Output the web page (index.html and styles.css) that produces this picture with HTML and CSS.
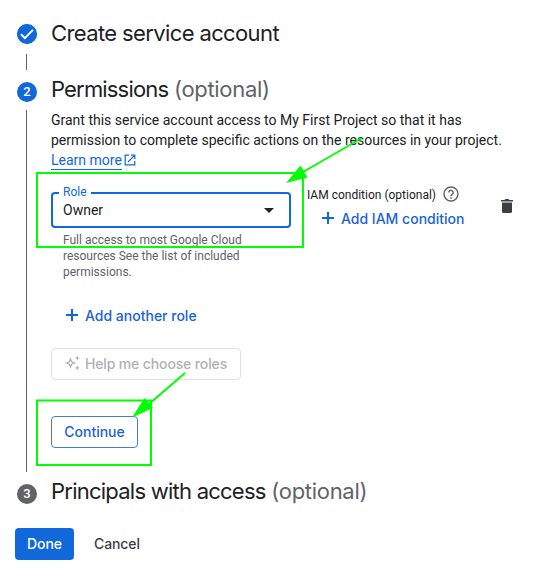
FILE: index.html
```html
<!DOCTYPE html>
<html lang="en">
<head>
<meta charset="utf-8">
<title>Create service account</title>
<link rel="stylesheet" href="styles.css">
</head>
<body>
<main class="page">
  <section class="step step-create">
    <div class="rail">
      <svg class="badge" viewBox="0 0 20 20"><circle cx="10" cy="10" r="10" fill="#1068da"/><path d="M4 10.3l3.8 3.8 8.2-8.2" fill="none" stroke="#fff" stroke-width="2"/></svg>
      <i class="line"></i>
    </div>
    <div class="content"><h2 class="t-create">Create service account</h2></div>
  </section>
  <section class="step step-permissions">
    <div class="rail"><span class="badge">2</span><i class="line"></i></div>
    <div class="content">
      <h2><span class="t-perm">Permissions</span> <span class="optional">(optional)</span></h2>
      <p class="intro">Grant this service account access to My First Project so that it has<br>permission to complete specific actions on the resources in your project.<br><a class="learn"><span>Learn more</span><svg width="12" height="12" viewBox="0 0 12 12" fill="none" stroke="#1068da" stroke-width="1.2"><path d="M5 1.2H1.2v9.6h9.6V7M7 1.2h3.8V5M10.8 1.2L4 8"/></svg></a></p>
      <div class="binding">
        <div class="role">
          <div class="select"><span class="label">Role</span><span>Owner</span><i class="arrow"></i></div>
          <p class="hint">Full access to most Google Cloud<br>resources See the list of included<br>permissions.</p>
        </div>
        <div class="condition">
          <div class="condition-label"><span>IAM condition (optional)</span><svg width="16" height="16" viewBox="0 0 16 16" fill="none" stroke="#5f6368" stroke-width="1.4"><circle cx="8" cy="8" r="7"/><path d="M5.8 6.5a2.2 2.2 0 1 1 3.6 1.7C8.5 8.9 8 9.200 8 10M8 11.200v1.500"/></svg></div>
          <div class="action add-condition"><svg class="plus" viewBox="0 0 12 12"><path d="M6 0v12M0 6h12"/></svg><span>Add IAM condition</span></div>
        </div>
        <svg class="trash" width="12" height="14" viewBox="0 0 12 14" fill="#3c4043"><path d="M0 1h3.500l1-1h3l1 1H12v1.500H0zM1 3.500h10V12.500Q11 14 9.500 14h-7Q1 14 1 12.500z"/></svg>
      </div>
      <div class="action add-role"><svg class="plus" viewBox="0 0 12 12"><path d="M6 0v12M0 6h12"/></svg><span>Add another role</span></div>
      <div class="button help"><svg width="16" height="16" viewBox="0 0 16 16" fill="#b0b1b3"><path d="M5.500 4L6.700 6.800 9.500 8 6.700 9.200 5.500 12 4.300 9.200 1.500 8 4.300 6.800z" fill="none" stroke="#b0b1b3" stroke-width="1.300"/><path d="M12.300.500l.7 1.900 1.900.7-1.900.7-.7 1.900-.7-1.900-1.900-.7 1.900-.7zM12.300 10.300l.7 1.900 1.900.7-1.900.7-.7 1.900-.7-1.900-1.900-.7 1.900-.7z"/></svg><span>Help me choose roles</span></div>
      <div class="button continue">Continue</div>
    </div>
  </section>
  <section class="step step-principals">
    <div class="rail"><span class="badge muted">3</span></div>
    <div class="content"><h2><span class="t-princ">Principals with access</span> <span class="optional">(optional)</span></h2></div>
  </section>
  <footer class="actions"><div class="button done">Done</div><div class="cancel">Cancel</div></footer>
</main>
<svg class="annotations" width="550" height="584" viewBox="0 0 550 584">
  <g fill="none" stroke="#0f0" stroke-width="2"><rect x="37" y="173" width="266" height="74"/><rect x="37" y="400.500" width="114" height="64.500"/><path d="M362 138L303 172M185 373L149 404"/></g>
  <path fill="#0f0" d="M286 183L300.500 165.500 307.500 177.500zM132 417.500L144.500 398 153 408z"/>
</svg>
</body>
</html>
```
FILE: styles.css
```css
* { box-sizing: border-box; }
body { margin: 0; background: #fff; color: #202124; font: 14px/20px Roboto, sans-serif; }
.page { padding: 24px 15px 0; }
.step { display: flex; margin-left: 2px; }
.rail { width: 34px; display: flex; flex-direction: column; flex: none; }
.badge { width: 20px; height: 20px; flex: none; border-radius: 50%; background: #1068da; color: #fff; text-align: center; font-size: 13px; font-weight: 500; line-height: 20px; }
.badge.muted { background: #5f6368; }
.line { width: 1px; margin-left: 9px; background: #5f6368; flex: 1; }
.step-create { height: 58px; }
.step-create .line { margin-top: 10px; margin-bottom: 12px; }
.step-permissions { height: 402px; }
.step-permissions .line { margin-top: 8px; margin-bottom: 12px; }
.step-principals { height: 44px; }
.content { flex: 1; margin-top: -7px; }
.step-create .content { margin-top: -5px; }
h2 { margin: 0; font: 400 22px/28px Inter, sans-serif; white-space: nowrap; letter-spacing: -.5px; }
.t-create { letter-spacing: -.62px; }
.t-perm { letter-spacing: -.83px; }
.t-princ { letter-spacing: -.76px; }
.optional { color: #5f6368; letter-spacing: -.3px; }
p { margin: 0; }
.intro { margin-top: 7px; white-space: nowrap; }
.learn { color: #1068da; display: inline-flex; align-items: center; gap: 3px; vertical-align: top; }
.learn span { border-bottom: 1px solid #1068da; line-height: 18px; padding-top: 1px; }
.learn svg { margin-left: -1px; }
.binding { display: flex; margin-top: 22px; }
.role { width: 240px; }
.select { position: relative; height: 36px; border: 2px solid #1068da; border-radius: 4px; padding: 0 15px 0 10px; display: flex; align-items: center; justify-content: space-between; }
.label { position: absolute; left: 6px; top: -10px; padding: 0 4px; background: #fff; color: #1068da; font-size: 12px; line-height: 16px; }
.arrow { border: 5px solid transparent; border-top-color: #202124; border-bottom: 0; }
.hint { margin: 4px 0 0 12px; font-size: 12px; line-height: 16px; color: #5f6368; white-space: nowrap; }
.condition { margin-left: 16px; width: 194px; margin-top: -6px; }
.condition-label { display: flex; align-items: center; gap: 7px; height: 16px; font-size: 12px; white-space: nowrap; }
.condition-label span { padding-top: 1px; }
.action { display: flex; align-items: center; gap: 7px; color: #1a62d8; font: 500 14px/20px Inter, sans-serif; white-space: nowrap; }
.plus { width: 12px; height: 12px; margin-bottom: 2px; fill: none; stroke: #1068da; stroke-width: 2; }
.add-condition { margin: 7px 0 0 15px; }
.trash { margin-top: 7px; }
.add-role { margin: 26px 0 0 15px; }
.button { display: flex; align-items: center; justify-content: center; height: 32px; border-radius: 4px; font: 500 14px/20px Inter, sans-serif; white-space: nowrap; }
.help { width: 190px; margin-top: 22px; border: 1px solid #e0e0e0; color: #b0b1b3; gap: 4px; letter-spacing: -.13px; }
.help svg { margin-bottom: 2px; }
.continue { width: 87px; margin-top: 36px; border: 1px solid #4a7bc8; color: #1a62d8; }
.actions { display: flex; align-items: center; gap: 20px; }
.done { width: 59px; background: #1068da; color: #fff; }
.cancel { color: #3c4043; font: 500 14px/20px Inter, sans-serif; letter-spacing: -.1px; }
.annotations { position: absolute; inset: 0; pointer-events: none; }
```
